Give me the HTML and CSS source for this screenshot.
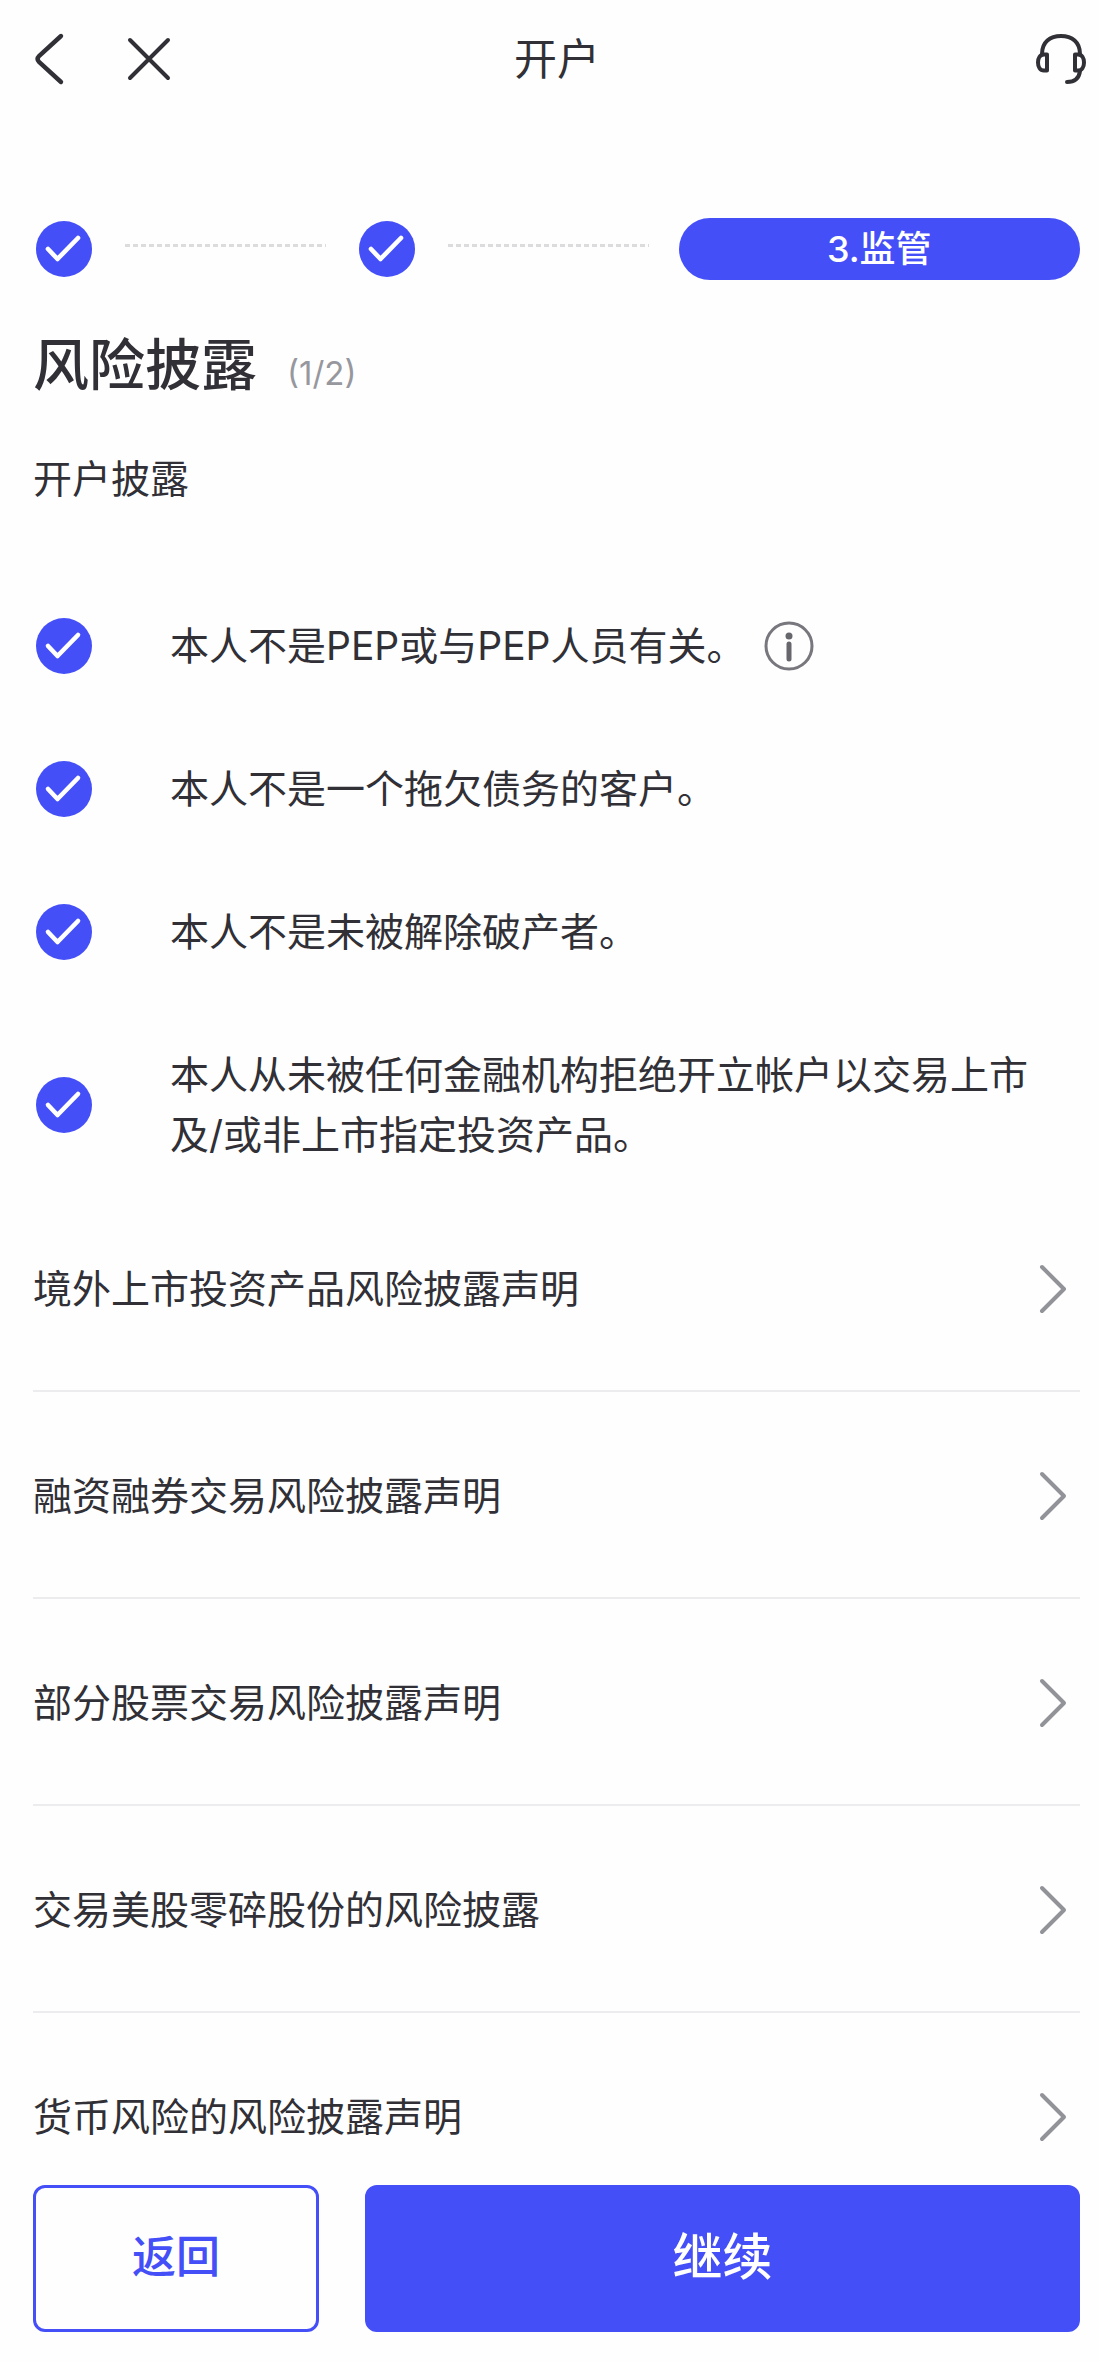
FILE: index.html
```html
<!DOCTYPE html>
<html lang="zh-CN">
<head>
<meta charset="utf-8">
<meta name="viewport" content="width=device-width, initial-scale=1">
<title>开户</title>
<link rel="stylesheet" href="styles.css">
</head>
<body>
<svg class="defs" aria-hidden="true">
  <symbol id="check" viewBox="0 0 62 62">
    <circle cx="31" cy="31" r="28" fill="#444ff8"/>
    <path d="M15 31 24.5 41 45 20" fill="none" stroke="#fff" stroke-width="4.6" stroke-linecap="round" stroke-linejoin="round"/>
  </symbol>
  <symbol id="chevron" viewBox="0 0 30 50">
    <path d="M4 3 26 25 4 47" fill="none" stroke="#929299" stroke-width="4" stroke-linecap="round" stroke-linejoin="round"/>
  </symbol>
</svg>
<header class="topbar">
  <div class="nav">
    <button class="icon-button" type="button" aria-label="返回上一页">
      <svg width="44" height="54" viewBox="0 0 44 54"><path d="M34 4 12 24Q9 27 12 30L34 50" fill="none" stroke="#303036" stroke-width="4.4" stroke-linecap="round"/></svg>
    </button>
    <button class="icon-button" type="button" aria-label="关闭">
      <svg width="50" height="50" viewBox="0 0 50 50"><path d="M6 6 44 44M44 6 6 44" fill="none" stroke="#303036" stroke-width="4" stroke-linecap="round"/></svg>
    </button>
  </div>
  <h1 class="title">开户</h1>
  <button class="icon-button support" type="button" aria-label="客服">
    <svg width="52" height="52" viewBox="0 0 52 52" fill="none" stroke="#303036" stroke-width="4" stroke-linecap="round" stroke-linejoin="round"><path d="M7 21C7 9 15 3 26 3S45 9 45 21"/><path d="M12 21.5V37.5H9C5 37.500 3 34 3 29.500S5 21.500 9 21.500Z"/><path d="M40 21.500V37.500H43C47 37.500 49 34 49 29.500S47 21.500 43 21.500Z"/><path d="M45 38C44 46 39 49 32 49"/></svg>
  </button>
</header>
<main class="content">
  <ol class="steps">
    <li class="step-done"><svg class="check" role="img" aria-label="已完成"><use href="#check"/></svg></li>
    <li class="step-line" aria-hidden="true"></li>
    <li class="step-done"><svg class="check" role="img" aria-label="已完成"><use href="#check"/></svg></li>
    <li class="step-line" aria-hidden="true"></li>
    <li class="step-current" aria-current="step">3.监管</li>
  </ol>
  <div class="heading">
    <h2 class="heading-text">风险披露</h2>
    <span class="heading-count">(1/2)</span>
  </div>
  <p class="subtitle">开户披露</p>
  <div class="declarations">
    <div class="declaration">
      <span class="tick"><input type="checkbox" id="d1" checked><svg class="check" aria-hidden="true"><use href="#check"/></svg></span>
      <label for="d1">本人不是PEP或与PEP人员有关。</label>
      <button class="icon-button info" type="button" aria-label="说明">
        <svg width="50" height="50" viewBox="0 0 50 50"><circle cx="25" cy="25" r="23" fill="none" stroke="#77777d" stroke-width="3"/><circle cx="25" cy="15" r="3.500" fill="#66666d"/><path d="M25 23V38" stroke="#66666d" stroke-width="5" stroke-linecap="round"/></svg>
      </button>
    </div>
    <div class="declaration">
      <span class="tick"><input type="checkbox" id="d2" checked><svg class="check" aria-hidden="true"><use href="#check"/></svg></span>
      <label for="d2">本人不是一个拖欠债务的客户。</label>
    </div>
    <div class="declaration">
      <span class="tick"><input type="checkbox" id="d3" checked><svg class="check" aria-hidden="true"><use href="#check"/></svg></span>
      <label for="d3">本人不是未被解除破产者。</label>
    </div>
    <div class="declaration">
      <span class="tick"><input type="checkbox" id="d4" checked><svg class="check" aria-hidden="true"><use href="#check"/></svg></span>
      <label for="d4">本人从未被任何金融机构拒绝开立帐户以交易上市及/或非上市指定投资产品。</label>
    </div>
  </div>
  <nav class="documents">
    <a class="document" href="#">境外上市投资产品风险披露声明<svg class="chevron" aria-hidden="true"><use href="#chevron"/></svg></a>
    <a class="document" href="#">融资融券交易风险披露声明<svg class="chevron" aria-hidden="true"><use href="#chevron"/></svg></a>
    <a class="document" href="#">部分股票交易风险披露声明<svg class="chevron" aria-hidden="true"><use href="#chevron"/></svg></a>
    <a class="document" href="#">交易美股零碎股份的风险披露<svg class="chevron" aria-hidden="true"><use href="#chevron"/></svg></a>
    <a class="document" href="#">货币风险的风险披露声明<svg class="chevron" aria-hidden="true"><use href="#chevron"/></svg></a>
  </nav>
</main>
<footer class="actions">
  <button class="button button-outline" type="button">返回</button>
  <button class="button button-primary" type="button">继续</button>
</footer>
</body>
</html>
```
FILE: styles.css
```css
* {
  box-sizing: border-box;
}

body {
  margin: 0;
  background: #fefefe;
  color: #303036;
  font-family: Inter, "Noto Sans CJK SC", sans-serif;
  font-size: 39px;
  line-height: 60px;
}

h1, h2, p, ol {
  margin: 0;
  padding: 0;
}

svg {
  display: block;
}

.defs {
  display: none;
}

.icon-button {
  padding: 0;
  border: 0;
  background: none;
  cursor: pointer;
}

.topbar {
  display: grid;
  grid-template-columns: 1fr auto 1fr;
  align-items: center;
  height: 118px;
  padding: 0 12px 0 27px;
}

.nav {
  display: flex;
  align-items: center;
  gap: 53px;
}

.title {
  font-size: 43px;
  font-weight: 400;
}

.support {
  justify-self: end;
}

.content {
  padding: 100px 19px 0 33px;
}

.steps {
  display: flex;
  align-items: center;
  gap: 30px;
  list-style: none;
}

.check {
  width: 62px;
  height: 62px;
}

.step-line {
  flex: 1;
  height: 3px;
  margin-bottom: 8px;
  background: repeating-linear-gradient(90deg, #dcdcde 0 5px, transparent 5px 8px);
}

.step-current {
  flex: 2;
  border-radius: 31px;
  background: #444ff8;
  color: #fff;
  font-size: 36px;
  font-weight: 500;
  line-height: 62px;
  text-align: center;
}

.heading {
  display: flex;
  align-items: baseline;
  gap: 30px;
  margin-top: 49px;
}

.heading-text {
  font-size: 56px;
  font-weight: 500;
  line-height: 72px;
}

.heading-count {
  color: #97979e;
  font-size: 33px;
  line-height: 40px;
}

.subtitle {
  margin-top: 48px;
}

.declarations {
  display: grid;
  gap: 83px;
  margin-top: 107px;
}

.declaration {
  display: flex;
  align-items: center;
  padding-right: 24px;
}

.tick {
  display: grid;
  flex: none;
  grid-template-rows: 60px;
  margin-right: 75px;
  align-items: center;
}

.tick > * {
  grid-area: 1 / 1;
}

.tick input {
  width: 62px;
  height: 60px;
  margin: 0;
  opacity: 0;
}

.tick .check {
  pointer-events: none;
}

.tick input:not(:checked) + .check {
  filter: grayscale(1) opacity(0.3);
}

.info {
  margin-left: 18px;
}

.documents {
  margin-top: 20px;
}

.document {
  display: flex;
  align-items: center;
  justify-content: space-between;
  padding: 74px 12px 71px 0;
  border-bottom: 2px solid #ececee;
  color: inherit;
  text-decoration: none;
}

.document:last-child {
  padding-bottom: 0;
  border-bottom: 0;
}

.chevron {
  width: 30px;
  height: 50px;
}

.actions {
  position: sticky;
  bottom: 0;
  display: grid;
  grid-template-columns: 2fr 5fr;
  gap: 46px;
  padding: 38px 19px 30px 33px;
  background: #fefefe;
}

.button {
  height: 147px;
  padding: 0 0 4px;
  border: 3px solid #444ff8;
  border-radius: 12px;
  font-family: inherit;
  font-weight: 500;
  line-height: 60px;
  cursor: pointer;
}

.button-outline {
  background: #fefefe;
  color: #444ff8;
  font-size: 44px;
}

.button-primary {
  background: #444ff8;
  color: #fff;
  font-size: 50px;
}
```
